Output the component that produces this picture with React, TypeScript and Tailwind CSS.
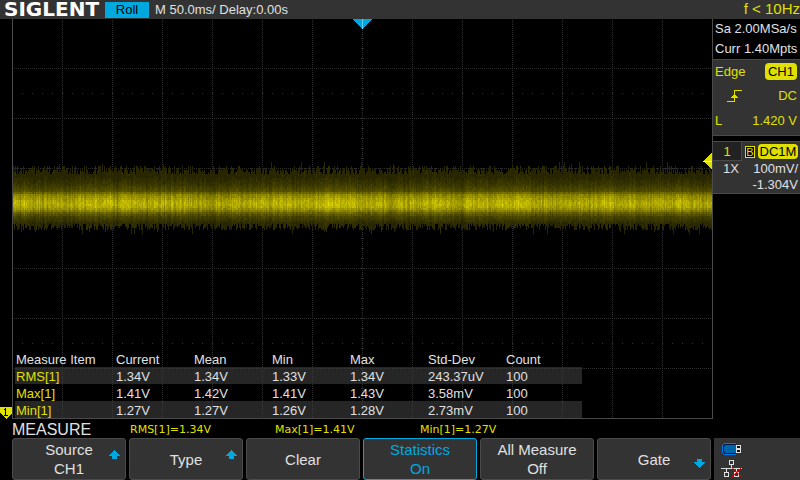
import React from 'react';

const PLOT_W = 699;
const PLOT_H = 399;

const statRows = [
    { item: 'RMS[1]', values: ['1.34V', '1.34V', '1.33V', '1.34V', '243.37uV', '100'] },
    { item: 'Max[1]', values: ['1.41V', '1.42V', '1.41V', '1.43V', '3.58mV', '100'] },
    { item: 'Min[1]', values: ['1.27V', '1.27V', '1.26V', '1.28V', '2.73mV', '100'] },
];

const readouts = ['RMS[1]=1.34V', 'Max[1]=1.41V', 'Min[1]=1.27V'];

interface SoftKey {
    lines: string[];
    arrow?: 'up' | 'down';
    active?: boolean;
}

const softKeys: SoftKey[] = [
    { lines: ['Source', 'CH1'], arrow: 'up' },
    { lines: ['Type'], arrow: 'up' },
    { lines: ['Clear'] },
    { lines: ['Statistics', 'On'], active: true },
    { lines: ['All Measure', 'Off'] },
    { lines: ['Gate'], arrow: 'down' },
];

// trace intensity (0..1) at a given plot row, linear between the stops
const profile: [number, number][] = [
    [145, 0.16], [158, 0.17], [166, 0.24], [173, 0.35], [175, 0.54], [179, 0.64],
    [183, 0.74], [187, 0.74], [191, 0.6], [194, 0.42], [198, 0.29], [204, 0.19], [216, 0.16],
];

const intensityAt = (y: number) => {
    for (let i = 1; i < profile.length; i++) {
        const [y0, v0] = profile[i - 1];
        const [y1, v1] = profile[i];
        if (y <= y1) return v0 + ((v1 - v0) * Math.max(0, y - y0)) / (y1 - y0);
    }
    return 0.16;
};

const LEVELS = 24;

// one path per brightness level, built from 1x2 cells
const buildTrace = () => {
    let seed = 7919;
    const rand = () => {
        seed = (seed * 1664525 + 1013904223) % 4294967296;
        return seed / 4294967296;
    };
    const paths: string[] = Array(LEVELS + 1).fill('');
    let drift = 0;
    for (let x = 0; x < PLOT_W; x++) {
        drift = drift * 0.8 + (rand() - 0.5) * 0.1;
        const column = 1 + drift + (rand() - 0.5) * 0.2;
        const top = 147 + Math.floor(rand() * 5) * 2 - (rand() > 0.94 ? 4 : 0);
        const bottom = 205 + Math.floor(rand() * 4) * 2 + (rand() > 0.92 ? 4 : 0);
        for (let y = top; y < bottom; y += 2) {
            const v = intensityAt(y + 1) * column * (0.91 + rand() * 0.18);
            const level = Math.max(4, Math.min(LEVELS, Math.round(v * LEVELS)));
            paths[level] += `M${x} ${y}h1v2h-1z`;
        }
    }
    return paths;
};

const trace = buildTrace();
const columns = Array.from({ length: 13 }, (_, i) => 49 + i * 50);
const rows = Array.from({ length: 7 }, (_, i) => 49 + i * 50);

const Graticule = () => (
    <g stroke="#303030" fill="none">
        {columns.map(x => <path key={x} d={`M${x + 0.5} 1V${PLOT_H}`} strokeDasharray="1 1" />)}
        {rows.map(y => <path key={y} d={`M1 ${y + 0.5}H${PLOT_W}`} strokeDasharray="1 1" />)}
        <path d={`M349.5 9V${PLOT_H}`} strokeWidth="3" strokeDasharray="1 9" />
        <path d={`M9 199.5H${PLOT_W}`} strokeWidth="3" strokeDasharray="1 9" />
        <path d={`M9 74.5H${PLOT_W}`} strokeDasharray="1 9" />
        <path d={`M9 324.5H${PLOT_W}`} strokeDasharray="1 9" />
    </g>
);

const Plot = () => (
    <svg
        className="block w-full h-full"
        viewBox={`0 0 ${PLOT_W} ${PLOT_H}`}
        preserveAspectRatio="none"
        shapeRendering="crispEdges"
        aria-hidden="true"
    >
        <Graticule />
        {trace.map((d, i) => {
            if (!d) return null;
            const c = Math.round((i / LEVELS) * 240);
            return <path key={i} d={d} fill={`rgb(${c}, ${Math.round(c * 0.96)}, 0)`} />;
        })}
        <path d="M339 0h21l-10.500 10z" fill="#00a8e0" />
        <path d="M349 0h1v10h-1z" fill="#60d0ff" />
        <path d={`M${PLOT_W} 133v18l-9-9z`} fill="#e0e000" />
        <path d={`M${PLOT_W - 9} 142h9v1h-9z`} fill="#ffff80" />
    </svg>
);

const StatsTable = () => (
    <table className="absolute bottom-0 left-[2px] w-[567px] table-fixed border-collapse text-[13px] leading-[15px] text-[#e0e0e0]">
        <colgroup>
            <col className="w-[100px]" />
            <col className="w-[78px]" />
            <col className="w-[78px]" />
            <col className="w-[78px]" />
            <col className="w-[78px]" />
            <col className="w-[78px]" />
            <col />
        </colgroup>
        <thead>
            <tr>
                {['Measure Item', 'Current', 'Mean', 'Min', 'Max', 'Std-Dev', 'Count'].map(h => (
                    <th key={h} scope="col" className="p-0 pt-0.5 pl-px text-left font-normal whitespace-nowrap">{h}</th>
                ))}
            </tr>
        </thead>
        <tbody>
            {statRows.map(row => (
                <tr key={row.item} className="odd:bg-[#404040]/60">
                    <th scope="row" className="p-0 pt-0.5 pl-px text-left font-normal text-[#e0e000]">{row.item}</th>
                    {row.values.map((v, i) => <td key={i} className="p-0 pt-0.5 pl-px">{v}</td>)}
                </tr>
            ))}
        </tbody>
    </table>
);

const ChannelMarker = () => (
    <div className="w-3 shrink-0 flex flex-col justify-end">
        <svg className="block w-3 h-3" viewBox="0 0 12 12" shapeRendering="crispEdges" aria-hidden="true">
            <path d="M0 0h12v6l-6 6l-6-6z" fill="#e0e000" />
            <path d="M5 1h1v7h2v1H4V8h1V3H4V2h1z" fill="#000" />
        </svg>
    </div>
);

const SidePanel = () => (
    <aside className="w-[87px] shrink-0 text-[13px] leading-4 text-[#e0e0e0] whitespace-nowrap">
        <div className="h-10 pl-0.5 leading-5">
            <p>Sa 2.00MSa/s</p>
            <p>Curr 1.40Mpts</p>
        </div>
        <section className="h-[77px] bg-[#333] border-y border-[#4a4a4a] text-[#e0e000] pl-0.5 pr-[3px] pt-[3px]">
            <div className="flex items-center justify-between">
                <span>Edge</span>
                <span className="h-[17px] px-[3px] rounded bg-[#e0e000] text-black leading-[17px]">CH1</span>
            </div>
            <div className="flex items-center justify-between pt-2 pl-3">
                <svg className="w-4 h-3" viewBox="0 0 16 12" shapeRendering="crispEdges" aria-hidden="true">
                    <path d="M0 11h7V0h8v1H8v11H0z" fill="#e0e000" />
                    <path d="M7 4h1v1h1v1h1v1h1v1H4V7h1V6h1V5h1z" fill="#e0e000" />
                </svg>
                <span>DC</span>
            </div>
            <div className="flex items-center justify-between pt-[9px]">
                <span>L</span>
                <span>1.420 V</span>
            </div>
        </section>
        <section className="mt-[5px] bg-[#333] border-y border-[#4a4a4a]">
            <div className="flex h-[19px]">
                <span className="w-[29px] bg-[#222] border-r border-b border-[#4a4a4a] text-[#e0e000] text-center leading-5">1</span>
                <span className="flex flex-1 items-center gap-[3px] pl-[3px]">
                    <span className="w-[10px] h-3 border border-[#e0e000] bg-black text-[#e0e000] text-[11px] leading-[10px] text-center">B</span>
                    <span className="h-[15px] w-10 rounded bg-[#e0e000] text-black text-center leading-4">DC1M</span>
                </span>
            </div>
            <div className="flex justify-between pl-[10px] pr-0.5">
                <span>1X</span>
                <span>100mV/</span>
            </div>
            <p className="pr-0.5 text-right">-1.304V</p>
        </section>
    </aside>
);

const KeyArrow = ({ direction }: { direction: 'up' | 'down' }) => (
    <svg
        className={`absolute right-[5px] w-[11px] h-[9px] ${direction === 'up' ? 'top-[11px]' : 'bottom-[11px] rotate-180'}`}
        viewBox="0 0 11 9"
        shapeRendering="crispEdges"
        aria-hidden="true"
    >
        <path d="M5 0h1v1h1v1h1v1h1v1h1v1h1v1H8v3H3V6H0V5h1V4h1V3h1V2h1V1h1z" fill="#00a8e0" />
    </svg>
);

const StatusIcons = () => (
    <div className="w-[86px] shrink-0 bg-[#333] pl-[7px] pt-[5px]">
        <svg className="block w-[23px] h-[35px]" viewBox="0 0 23 35" shapeRendering="crispEdges" aria-hidden="true">
            <path d="M3 0h12v1h-12zM3 11h12v1h-12zM1 2h1v8h-1zM2 1h1v1h-1zM2 10h1v1h-1z" fill="#0078f0" />
            <path d="M3 1h12v10H3v-1H2V2h1z" fill="#001848" />
            <path d="M4 2h11v8H4V9H3V3h1z" fill="#0064a8" />
            <path d="M15 2h5v8h-5z" fill="#e0e0e0" />
            <path d="M16 3h3v2h-3zM16 7h3v2h-3z" fill="#111" />
            <g stroke="#e0e0e0" fill="none">
                <path d="M8.500 17.500h4v4h-4zM3.500 29.500h4v4h-4zM13.500 29.500h4v4h-4z" />
                <path d="M0 25.500h21M10.500 22v3M5.500 26v3M15.500 26v3" />
            </g>
            <path d="M11 24.500l9.500 9.500M20.500 24.500l-9.500 9.500" stroke="#e00000" fill="none" shapeRendering="auto" />
        </svg>
    </div>
);

export default function App() {
    return (
        <div className="min-h-screen flex flex-col bg-black font-['Liberation_Sans',Arial,sans-serif] text-[#e0e0e0]">
            <header className="h-[19px] shrink-0 bg-[#333] flex items-center whitespace-nowrap pl-1 text-[13px]">
                <span className="w-[101px] font-['DejaVu_Sans',sans-serif] font-bold text-[20px] leading-[19px] text-white">SIGLENT</span>
                <span className="w-11 h-4 bg-[#00a8e0] text-black text-center leading-4">Roll</span>
                <span className="pl-[6px]">M 50.0ms/ Delay:0.00s</span>
                <span className="ml-auto text-[15px] text-[#e0e000]">f &lt; 10Hz</span>
            </header>

            <main className="flex flex-1 min-h-[400px]">
                <ChannelMarker />
                <div className="relative flex-1 min-w-0 border-x border-b border-[#4a4a4a]">
                    <Plot />
                    <StatsTable />
                </div>
                <SidePanel />
            </main>

            <div className="h-[19px] shrink-0 flex items-center pl-3 pt-0.5 leading-[17px]">
                <h1 className="w-[118px] text-[16px]">MEASURE</h1>
                {readouts.map(r => (
                    <span key={r} className="w-[145px] font-['DejaVu_Sans',sans-serif] text-[11px] text-[#e0e000]">{r}</span>
                ))}
            </div>

            <footer className="h-[42px] shrink-0 flex pl-3">
                <div className="flex flex-1 gap-[3px] pr-[3px]">
                    {softKeys.map(key => (
                        <button
                            key={key.lines[0]}
                            type="button"
                            className={`relative flex-1 min-w-0 rounded-[3px] border bg-[#333] text-[15px] leading-[19px] ${key.active ? 'border-[#00a8e0] text-[#00a8e0]' : 'border-[#4a4a4a]'}`}
                        >
                            {key.lines.map(line => <span key={line} className="block">{line}</span>)}
                            {key.arrow && <KeyArrow direction={key.arrow} />}
                        </button>
                    ))}
                </div>
                <StatusIcons />
            </footer>
        </div>
    );
}
